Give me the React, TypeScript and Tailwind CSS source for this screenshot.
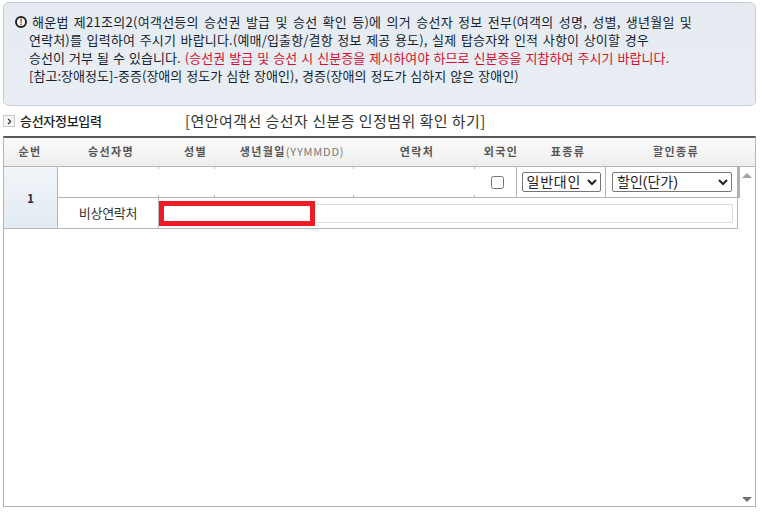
import { ChevronRight } from "lucide-react";

const headers = ["순번", "승선자명", "성별", "생년월일", "연락처", "외국인", "표종류", "할인종류"];

function TextCell() {
  return (
    <div className="border-r border-b border-[#b5b5b5] py-[2px]">
      <input className="block w-[calc(100%+1px)] h-full bg-white outline-none" />
    </div>
  );
}

export default function App() {
  return (
    <div className="relative w-[760px] h-[513px] bg-white pt-[2px] pl-[3px] overflow-hidden font-['Noto_Sans_CJK_KR',sans-serif]">
      {/* Notice */}
      <div className="w-[753px] h-[104px] rounded-[6px] border border-[#c3ccd6] bg-gradient-to-b from-[#e6ebf1] to-[#e9eef4] pl-[25px] pt-[10px] text-[13px] leading-[18px] text-[#141f30] whitespace-nowrap">
        <div className="flex items-center">
          <span className="-ml-[14px] mr-[5px] flex h-[12px] w-[12px] items-center justify-center rounded-full border-[2px] border-[#222] bg-white text-[8px] font-bold leading-none">!</span>
          <span className="tracking-[0.27px] [word-spacing:2px]">해운법 제21조의2(여객선등의 승선권 발급 및 승선 확인 등)에 의거 승선자 정보 전부(여객의 성명, 성별, 생년월일 및</span>
        </div>
        <div className="tracking-[0.16px] [word-spacing:1.5px]">연락처)를 입력하여 주시기 바랍니다.(예매/입출항/결항 정보 제공 용도), 실제 탑승자와 인적 사항이 상이할 경우</div>
        <div className="tracking-[0.06px] [word-spacing:1px]">
          승선이 거부 될 수 있습니다. <span className="text-[#d3112e]">(승선권 발급 및 승선 시 신분증을 제시하여야 하므로 신분증을 지참하여 주시기 바랍니다.</span>
        </div>
        <div className="tracking-[0.03px] [word-spacing:1px]">[참고:장애정도]-중증(장애의 정도가 심한 장애인), 경증(장애의 정도가 심하지 않은 장애인)</div>
      </div>

      {/* Title */}
      <div className="flex h-[30px] items-center whitespace-nowrap">
        <span className="flex h-[12px] w-[12px] items-center justify-center border border-[#ccc] bg-[#f4f4f4]">
          <ChevronRight className="h-[9px] w-[9px] text-[#333]" strokeWidth={3} />
        </span>
        <span className="ml-[5px] w-[165px] text-[13px] font-medium tracking-[-0.3px] text-[#222]">승선자정보입력</span>
        <span className="text-[15px] tracking-[0.45px] text-[#333]">[연안여객선 승선자 신분증 인정범위 확인 하기]</span>
      </div>

      {/* Passenger panel */}
      <div className="relative w-[753px] h-[371px] border-t-2 border-t-[#5a5a5a] border-x border-b border-x-[#b5b5b5] border-b-[#b5b5b5]">
        <div className="grid h-[29px] grid-cols-[52px_110px_59px_134px_116px_52px_82px_134px] items-center border-b border-[#b5b5b5] bg-gradient-to-b from-[#fbfbfb] to-[#eeeeee] pb-[2px] text-[11px] font-bold tracking-[1.4px] text-[#555]">
          {headers.map((h) => (
            <div key={h} className="flex justify-center whitespace-nowrap">
              {h}
              {h === "생년월일" && <span className="font-normal tracking-[0.8px] text-[#777]">(YYMMDD)</span>}
            </div>
          ))}
        </div>

        <div className="flex">
          <div className="grid w-[734px] self-start grid-cols-[54px_101px_56px_139px_121px_42px_89px_132px] grid-rows-[31px_30px] border-b border-r border-[#b5b5b5]">
            <div className="row-span-2 flex items-center justify-center border-r border-[#b5b5b5] bg-gradient-to-b from-[#f1f5f9] to-[#e2eaf2] text-[12px] font-bold text-[#333]">
              1
            </div>
            <TextCell />
            <TextCell />
            <TextCell />
            <TextCell />
            <div className="flex items-center justify-center border-r border-b border-[#b5b5b5]">
              <input type="checkbox" className="m-0 ml-[4px] h-[13px] w-[13px]" />
            </div>
            <div className="flex items-center justify-center border-r border-b border-[#b5b5b5]">
              <select className="h-[20px] w-[79px] rounded-[2px] border border-[#767676] bg-white font-['Liberation_Sans','Noto_Sans_CJK_KR',sans-serif] text-[14px] tracking-[0.8px] text-[#222]">
                <option>일반대인</option>
              </select>
            </div>
            <div className="flex items-center justify-center border-b border-[#b5b5b5]">
              <select className="h-[20px] w-[120px] rounded-[2px] border border-[#767676] bg-white font-['Liberation_Sans','Noto_Sans_CJK_KR',sans-serif] text-[14px] text-[#222]">
                <option>할인(단가)</option>
              </select>
            </div>
            <div className="flex items-center justify-center border-r border-[#b5b5b5] text-[13px] tracking-[-0.3px] text-[#333]">
              비상연락처
            </div>
            <div className="col-span-6 flex items-center pl-[1px] pr-[5px]">
              <input className="h-[19px] w-full border border-[#dcdcdc] bg-white outline-none" />
            </div>
          </div>

          {/* Scrollbar */}
          <div className="flex h-[339px] flex-1 flex-col items-center justify-between pt-[6px] pb-[4px]">
            <div className="h-0 w-0 border-x-[5px] border-b-[5px] border-x-transparent border-b-[#a3a3a3]" />
            <div className="h-0 w-0 border-x-[5px] border-t-[5px] border-x-transparent border-t-[#707070]" />
          </div>
        </div>

        {/* thick edge beside the first row */}
        <div className="absolute left-[733px] top-[29px] h-[31px] w-[3px] bg-[#b0b0b0]" />
        {/* red highlight over the emergency contact field */}
        <div className="absolute left-[155px] top-[63px] h-[25px] w-[156px] border-[5px] border-[#ed1c24]" />
      </div>
    </div>
  );
}
